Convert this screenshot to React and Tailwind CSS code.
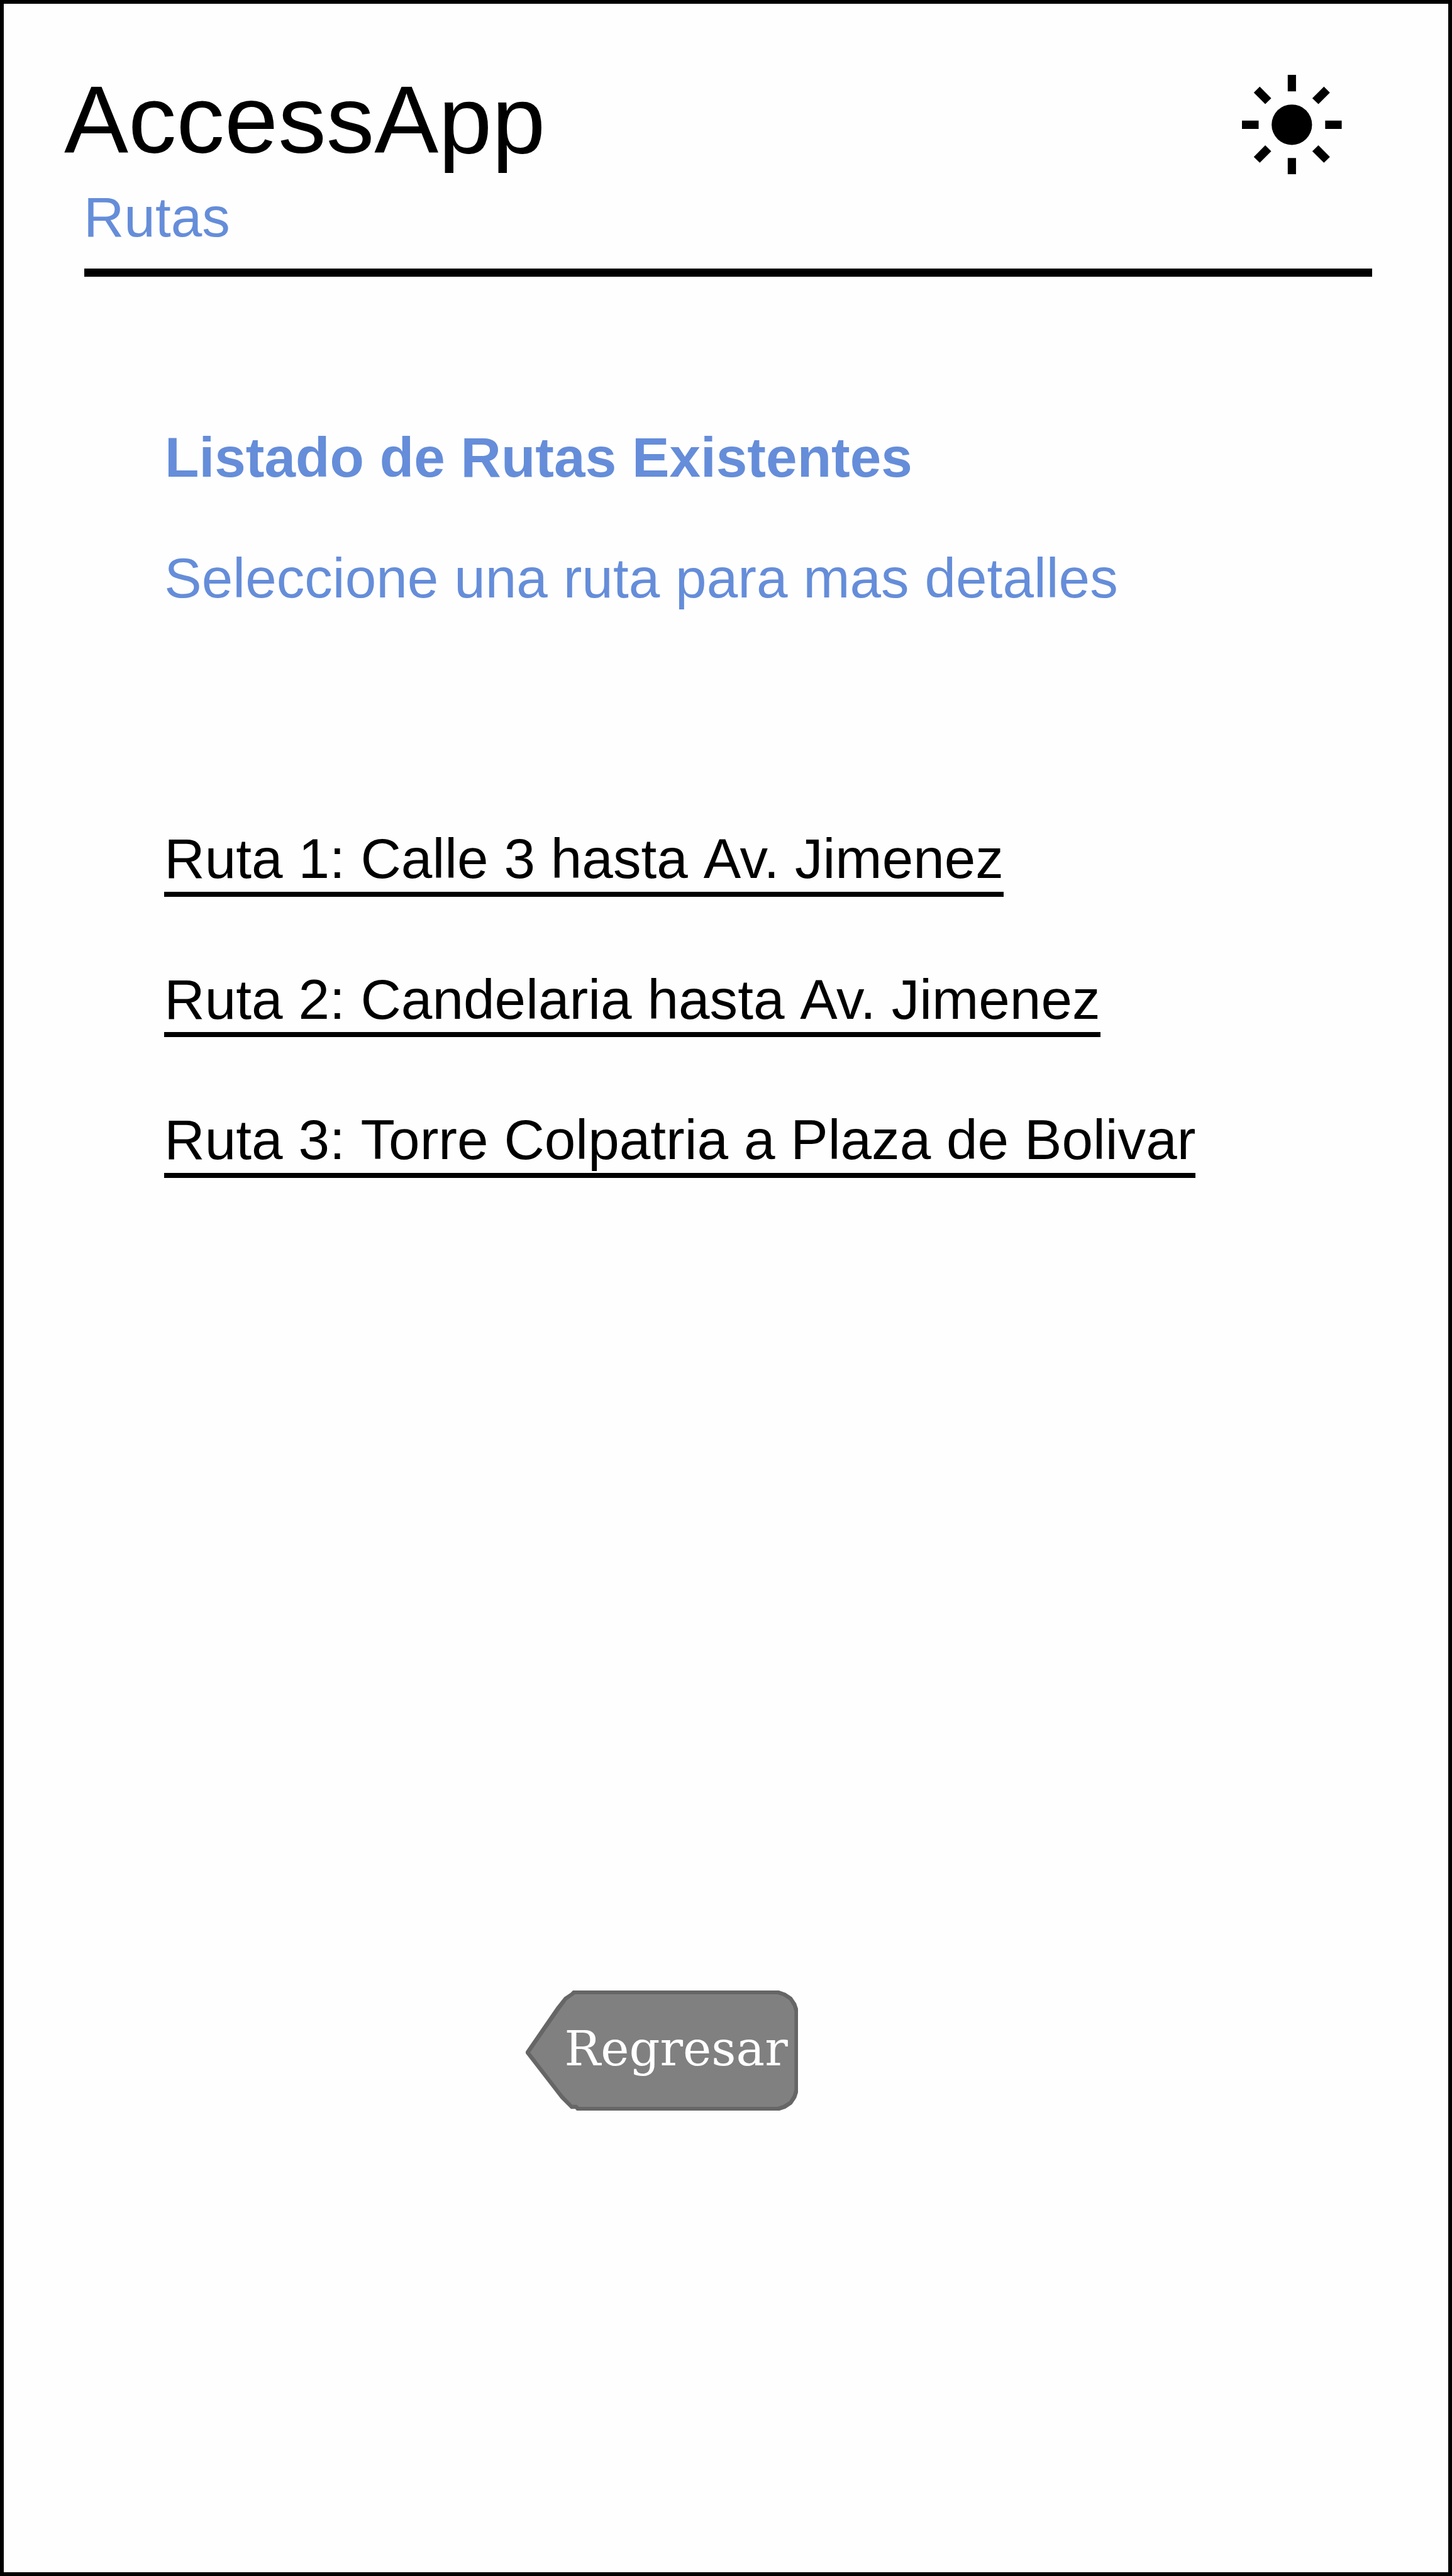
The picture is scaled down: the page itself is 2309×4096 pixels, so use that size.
import { Fragment } from 'react';

const routes = [
  'Ruta 1: Calle 3 hasta Av. Jimenez',
  'Ruta 2: Candelaria hasta Av. Jimenez',
  'Ruta 3: Torre Colpatria a Plaza de Bolivar',
];

// Keeps every word in its own inline box so spaces are never kerned.
function Words({ text }) {
  return text.split(' ').map((word, i) => (
    <Fragment key={i}>
      {i > 0 && ' '}
      <span className="inline-block">{word}</span>
    </Fragment>
  ));
}

function SunIcon() {
  return (
    <svg viewBox="94 84 634 634" className="h-[158.6px] w-[158.6px]" fill="#000">
      <circle cx="411" cy="401" r="128.5" />
      <path d="M385 84h52.5v105h-52.5z M385 613h52.5v105h-52.5z M94 375h106v53H94z M623 375h105v53H623z" />
      <path d="M207 159l73 74-38 37-73-73z M615 159l38 38-73 73-39-37z M242 532l38 38-73 73-38-37z M580 532l73 74-38 37-74-73z" />
    </svg>
  );
}

function BackButton() {
  return (
    <button className="relative ml-[829.6px] block h-[191.4px] w-[433.8px]">
      <svg
        viewBox="81 78 1416 765"
        preserveAspectRatio="none"
        className="absolute inset-0 h-full w-full"
      >
        <polygon
          fill="#666666"
          points="326,78 1395,78 1430,93 1463,120 1485,160 1497,203 1497,717 1485,761 1463,801 1430,828 1395,843 347,843 338,830 316,830 262,764 81,478 81,466 240,183 281,120 314,93"
        />
        <polygon
          fill="#808080"
          points="337,102 1388,102 1418,114 1449,139 1468,177 1476,212 1476,708 1468,744 1449,781 1418,805 1388,817 357,817 346,804 323,804 275,744 104,472 258,201 296,138"
        />
      </svg>
      <span className="relative block pb-[6px] pl-[62px] text-left font-['DejaVu_Serif',serif] text-[76.5px] leading-[77px] whitespace-nowrap text-white">
        Regresar
      </span>
    </button>
  );
}

export default function App() {
  return (
    <div className="h-[4096px] w-[2309px] overflow-hidden border-[6px] border-black bg-[#fefefe] font-['Liberation_Sans',Arial,sans-serif] text-black">
      <header className="h-[434.4px] pt-[104px]">
        <div className="flex h-[188.5px] items-start justify-between pr-[169px] pl-[96px]">
          <h1 className="text-[153px] leading-[159px] whitespace-nowrap">AccessApp</h1>
          <div className="pt-[8.6px]">
            <SunIcon />
          </div>
        </div>
        <p className="ml-[127px] text-[89.15px] leading-[93px] text-[#658dd9]">Rutas</p>
        <div className="mt-[35.9px] ml-[128px] h-[13px] w-[2048px] bg-black" />
      </header>
      <main className="pl-[255.3px]">
        <h2 className="mt-[241px] pl-[0.7px] text-[89.15px] leading-[93px] font-bold whitespace-nowrap text-[#658dd9]">
          <Words text="Listado de Rutas Existentes" />
        </h2>
        <p className="mt-[98.5px] text-[89.15px] leading-[93px] whitespace-nowrap text-[#658dd9]">
          <Words text="Seleccione una ruta para mas detalles" />
        </p>
        <ul className="mt-[353.5px] flex flex-col items-start">
          {routes.map((route) => (
            <li key={route} className="h-[223.4px]">
              <a className="block h-[106.5px] border-b-[8px] border-black text-[89.15px] leading-[93px] whitespace-nowrap">
                <Words text={route} />
              </a>
            </li>
          ))}
        </ul>
      </main>
      <div className="mt-[1175px]">
        <BackButton />
      </div>
    </div>
  );
}
